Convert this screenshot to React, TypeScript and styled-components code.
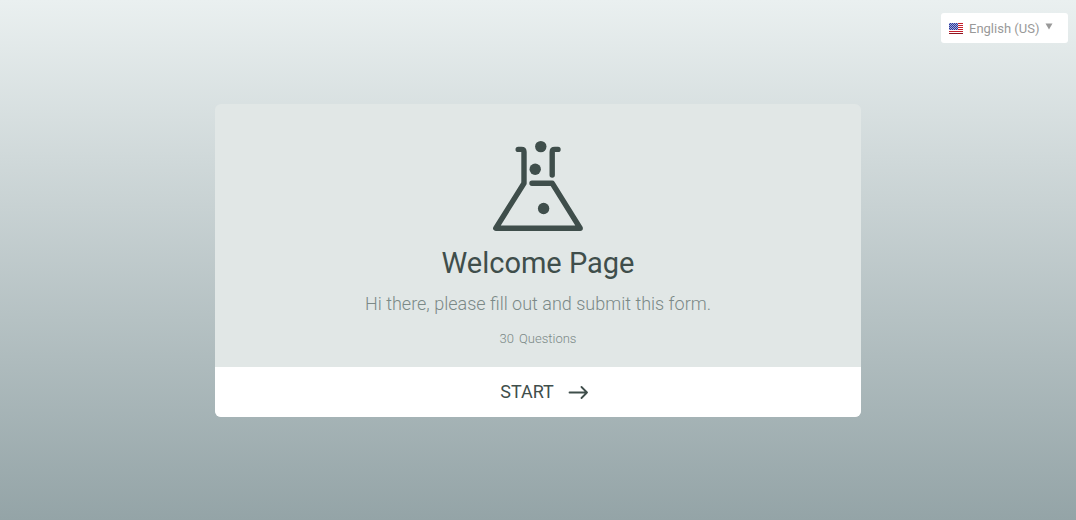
import React, { useState } from "react";
import styled, { createGlobalStyle } from "styled-components";

const GlobalStyle = createGlobalStyle`
  *, *::before, *::after { box-sizing: border-box; }
  body {
    margin: 0;
    font-family: Roboto, "Liberation Sans", sans-serif;
    color: #3f4e4b;
  }
`;

const Page = styled.main`
  position: relative;
  min-height: 100vh;
  display: flex;
  align-items: center;
  justify-content: center;
  background: linear-gradient(180deg, #eaf0f0 0%, #94a4a7 100%);
`;

const LanguagePicker = styled.div`
  position: absolute;
  top: 13px;
  right: 8px;
  height: 30px;
  padding: 0 15px 0 8px;
  display: flex;
  align-items: center;
  background: #ffffff;
  border-radius: 3px;
`;

const LanguageSelect = styled.select`
  appearance: none;
  border: 0;
  margin: 0 5px 0 6px;
  padding: 2px 0 0;
  background: transparent;
  font: 400 13px/20px Roboto, "Liberation Sans", sans-serif;
  color: #999999;
  cursor: pointer;
`;

const Caret = styled.svg`
  display: block;
  margin-bottom: 4px;
`;

const Card = styled.section`
  width: 60%;
  min-width: 280px;
  border-radius: 6px;
  overflow: hidden;
  background: #e1e7e6;
`;

const CardBody = styled.div`
  display: flex;
  flex-direction: column;
  align-items: center;
  padding: 36px 24px 18px;
  text-align: center;
`;

const Title = styled.h1`
  margin: 14px 0 0;
  font-size: 29px;
  line-height: 36px;
  font-weight: 400;
`;

const Description = styled.p`
  margin: 10px 0 0;
  font-size: 18px;
  line-height: 26px;
  font-weight: 300;
  color: #7b8987;
`;

const QuestionCount = styled.p`
  display: flex;
  gap: 5px;
  margin: 12px 0 0;
  font-size: 13px;
  line-height: 20px;
  font-weight: 300;
  color: #7b8987;
`;

const StartButton = styled.button`
  display: flex;
  align-items: center;
  justify-content: center;
  gap: 14px;
  width: 100%;
  height: 50px;
  border: 0;
  padding: 0 0 0 13px;
  background: #ffffff;
  font: 400 18px/24px Roboto, "Liberation Sans", sans-serif;
  color: #3f4e4b;
  cursor: pointer;
`;

const UsFlag = () => (
  <svg width="14" height="11" viewBox="0 0 14 11" aria-hidden="true" shapeRendering="crispEdges">
    <rect width="14" height="11" fill="#ffffff" />
    {[0, 2, 4, 6, 8, 10].map((y) => (
      <rect key={y} y={y} width="14" height="1" fill={y === 10 ? "#8f1420" : "#c4202c"} />
    ))}
    <rect width="9" height="7" fill="#2b3a9b" />
    {[0, 1, 2, 3, 4, 5, 6].map((y) =>
      [0, 2, 4, 6, 8]
        .map((x) => x + (y % 2))
        .filter((x) => x < 9)
        .map((x) => <rect key={`${x}-${y}`} x={x} y={y} width="1" height="1" fill="#a3abdc" />)
    )}
  </svg>
);

const FlaskIcon = () => (
  <svg width="90" height="91" viewBox="0 0 90 91" fill="none" aria-hidden="true">
    <g stroke="#3f4e4b" strokeWidth="5.4" strokeLinecap="round" strokeLinejoin="round">
      <path d="M25.2 9.4H28.5Q31 9.4 31 12V43.2L2.8 88.2H87.2L59.2 43.2H39" />
      <path d="M59.2 35V12Q59.2 9.4 61.8 9.4H65" />
    </g>
    <g fill="#3f4e4b">
      <circle cx="47.8" cy="6.6" r="5.7" />
      <circle cx="42.2" cy="29.2" r="5.7" />
      <circle cx="50.6" cy="68.5" r="5.7" />
    </g>
  </svg>
);

const ArrowIcon = () => (
  <svg width="21" height="14" viewBox="0 0 21 14" fill="none" aria-hidden="true">
    <path
      d="M1.5 7.5H19M13.5 2L19 7.5L13.5 13"
      stroke="#3f4e4b"
      strokeWidth="1.8"
      strokeLinecap="round"
      strokeLinejoin="round"
    />
  </svg>
);

export default function App() {
  const [language, setLanguage] = useState("en-US");

  return (
    <>
      <GlobalStyle />
      <Page>
        <LanguagePicker>
          <UsFlag />
          <LanguageSelect
            aria-label="Language"
            value={language}
            onChange={(event) => setLanguage(event.target.value)}
          >
            <option value="en-US">English (US)</option>
          </LanguageSelect>
          <Caret width="8" height="7" viewBox="0 0 8 7" aria-hidden="true">
            <path d="M0.5 0.5H7.5L4 6.5Z" fill="#999999" />
          </Caret>
        </LanguagePicker>
        <Card>
          <CardBody>
            <FlaskIcon />
            <Title>Welcome Page</Title>
            <Description>Hi there, please fill out and submit this form.</Description>
            <QuestionCount>
              <span>30</span>
              <span>Questions</span>
            </QuestionCount>
          </CardBody>
          <StartButton type="button">
            START
            <ArrowIcon />
          </StartButton>
        </Card>
      </Page>
    </>
  );
}
